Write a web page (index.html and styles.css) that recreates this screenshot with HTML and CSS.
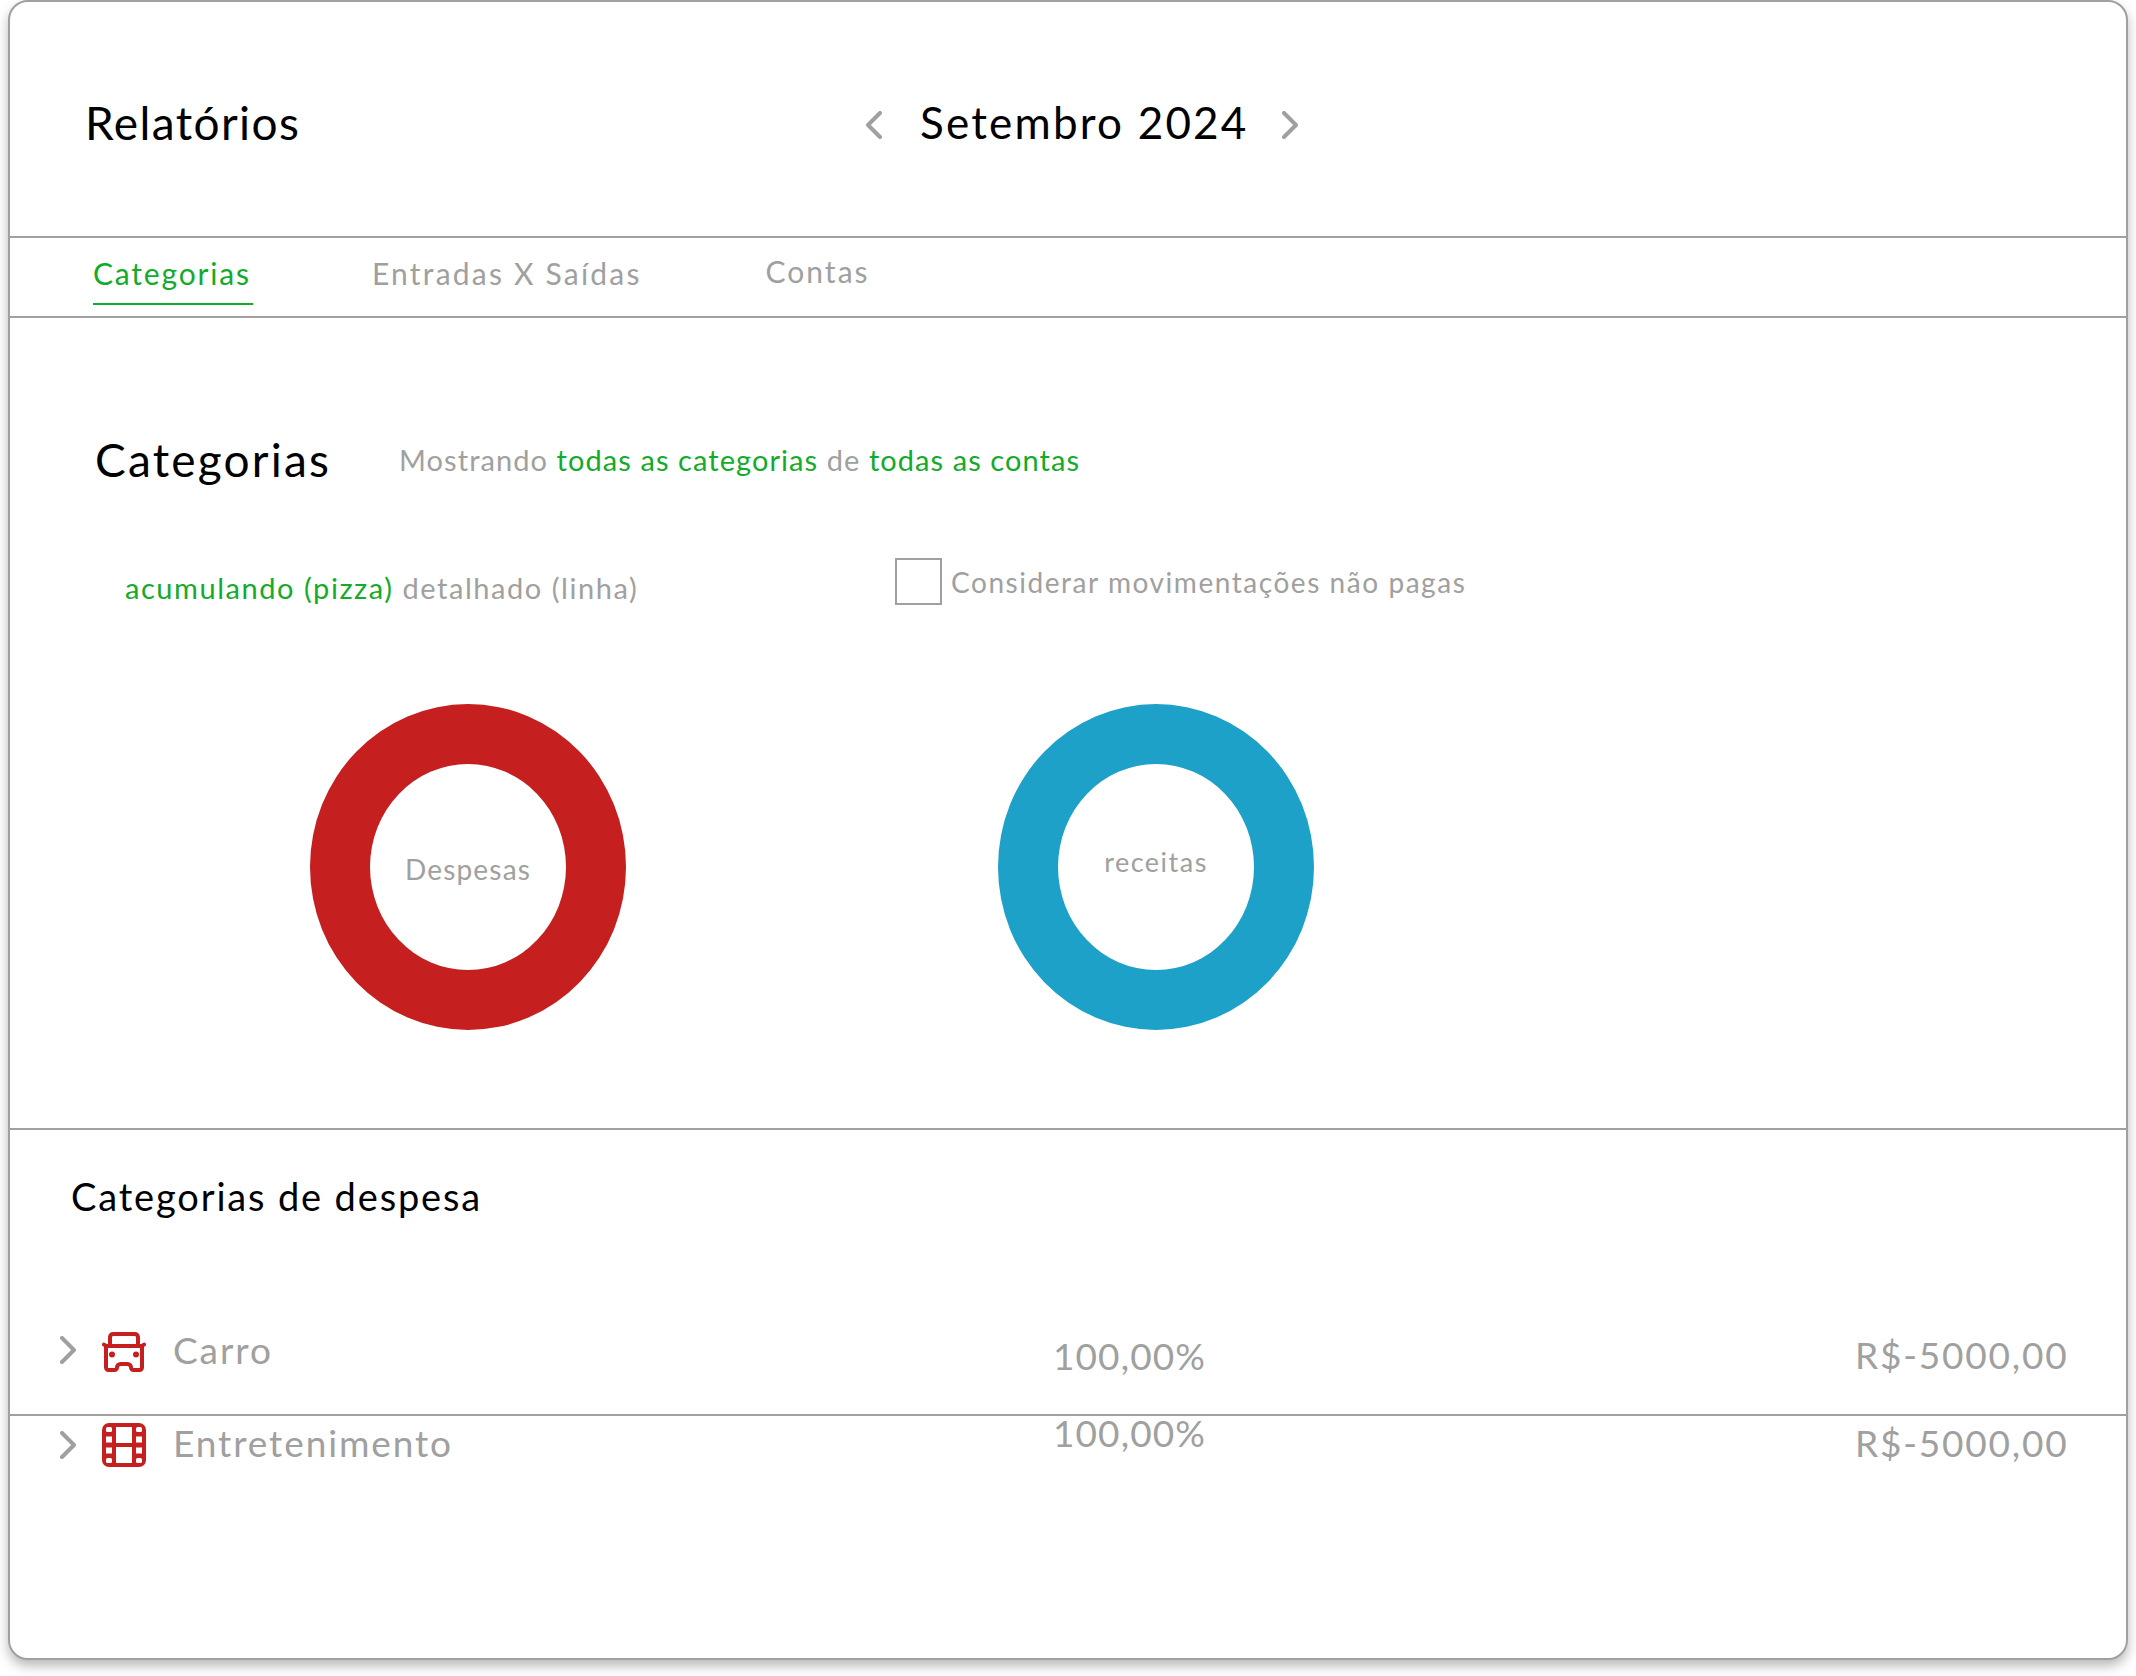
FILE: index.html
```html
<!DOCTYPE html>
<html lang="pt-BR">
<head>
<meta charset="utf-8">
<title>Relatórios</title>
<link rel="stylesheet" href="styles.css">
</head>
<body>
<main class="card">
  <header class="top">
    <h1 class="page-title">Relatórios</h1>
    <div class="month-nav">
      <svg class="chev chev-nav" viewBox="0 0 16 28"><path d="M14 2 2 14l12 12"/></svg>
      <span class="month">Setembro 2024</span>
      <svg class="chev chev-nav chev-next" viewBox="0 0 16 28"><path d="M2 2l12 12L2 26"/></svg>
    </div>
  </header>
  <nav class="tabs">
    <a class="tab tab-active">Categorias</a>
    <a class="tab tab-mid">Entradas X Saídas</a>
    <a class="tab tab-last">Contas</a>
  </nav>
  <section class="charts">
    <div class="heading-row">
      <h2 class="section-title">Categorias</h2>
      <p class="filter">Mostrando <b class="on">todas as categorias</b> de <b class="on">todas as contas</b></p>
    </div>
    <div class="options-row">
      <p class="mode"><b class="on">acumulando (pizza)</b> detalhado (linha)</p>
      <label class="check"><span class="box"></span><span>Considerar movimentações não pagas</span></label>
    </div>
    <div class="donuts">
      <div class="donut donut-red"><span class="donut-label">Despesas</span></div>
      <div class="donut donut-blue"><span class="donut-label donut-label-small">receitas</span></div>
    </div>
  </section>
  <section class="expenses">
    <h3 class="sub-title">Categorias de despesa</h3>
    <div class="row row-first">
      <svg class="chev chev-up" viewBox="0 0 16 28"><path d="M2 2l12 12L2 26"/></svg>
      <svg class="icon" viewBox="0 0 44 40"><g fill="none" stroke="#c51f1f" stroke-width="4" stroke-linecap="round" stroke-linejoin="round"><path d="M8 14V5a3.500 3.500 0 0 1 3.500-3h21A3.500 3.500 0 0 1 36 5v9"/><path d="M2 12.500 4 14H40l2-1.500"/><path d="M4 14v21.500a2.500 2.500 0 0 0 2.500 2.500h6a2.500 2.500 0 0 0 2.500-2.500 3.500 3.500 0 0 1 3.500-3.500h7a3.500 3.500 0 0 1 3.500 3.500 2.500 2.500 0 0 0 2.500 2.500h6a2.500 2.500 0 0 0 2.500-2.500V14"/></g><circle cx="10" cy="22.500" r="3" fill="#c51f1f"/><circle cx="34" cy="22.500" r="3" fill="#c51f1f"/></svg>
      <span class="row-name">Carro</span>
      <span class="row-pct row-pct-down">100,00%</span>
      <span class="row-amt row-amt-down">R$-5000,00</span>
    </div>
    <div class="row row-second">
      <svg class="chev" viewBox="0 0 16 28"><path d="M2 2l12 12L2 26"/></svg>
      <svg class="icon icon-film" viewBox="0 0 44 44"><rect width="44" height="44" rx="7" fill="#c51f1f"/><g fill="#fff"><rect x="4" y="4" width="6" height="5" rx="1.500"/><rect x="4" y="13.500" width="6" height="6"/><rect x="4" y="24.500" width="6" height="6"/><rect x="4" y="35" width="6" height="5" rx="1.500"/><rect x="34" y="4" width="6" height="5" rx="1.500"/><rect x="34" y="13.500" width="6" height="6"/><rect x="34" y="24.500" width="6" height="6"/><rect x="34" y="35" width="6" height="5" rx="1.500"/><rect x="14" y="4" width="16" height="16"/><rect x="14" y="24" width="16" height="16"/></g></svg>
      <span class="row-name">Entretenimento</span>
      <span class="row-pct row-pct-up">100,00%</span>
      <span class="row-amt row-amt-up">R$-5000,00</span>
    </div>
  </section>
</main>
</body>
</html>
```
FILE: styles.css
```css
* { box-sizing: border-box; }
html, body { margin: 0; height: 1676px; background: #fff; overflow: hidden; }
body { font-family: Lato, "Open Sans", sans-serif; color: #a0a0a0; padding-left: 8px; }
h1, h2, h3, p { margin: 0; font-weight: 400; }
b { font-weight: 400; }
.on { color: #13ab2b; }

.card {
  width: 2120px; height: 1660px;
  background: #fff;
  border: 2px solid #a0a0a0;
  border-radius: 20px;
  box-shadow: 0 6px 12px rgba(0,0,0,.28);
  display: flex; flex-direction: column;
}

.top {
  height: 236px; flex: none;
  border-bottom: 2px solid #a0a0a0;
  display: flex; align-items: center;
  padding: 6px 0 0 75px;
}
.page-title { font-size: 46px; color: #000; width: 781px; letter-spacing: 1.4px; }
.month-nav { display: flex; align-items: center; gap: 38px; }
.month { font-size: 44px; color: #000; letter-spacing: 2.2px; }
.chev { width: 16px; height: 28px; flex: none; }
.chev-nav { margin-top: 6px; }
.chev-next { margin-left: -5px; }
.chev-up { margin-bottom: 5px; }
.chev path { fill: none; stroke: #a0a0a0; stroke-width: 4; stroke-linecap: round; stroke-linejoin: round; }

.tabs {
  height: 80px; flex: none;
  border-bottom: 2px solid #a0a0a0;
  display: flex; align-items: flex-start;
  padding-left: 83px;
  font-size: 30px;
}
.tab { display: block; height: 67px; padding-top: 17px; letter-spacing: 2px; }
.tab-active { color: #13ab2b; width: 160px; letter-spacing: 1.8px; border-bottom: 2px solid #13ab2b; }
.tab-mid { margin-left: 119px; letter-spacing: 2.2px; }
.tab-last { margin-left: 124px; padding-top: 15px; }

.charts { height: 812px; flex: none; border-bottom: 2px solid #a0a0a0; }
.heading-row { display: flex; align-items: center; padding: 114px 0 0 85px; }
.section-title { font-size: 46px; color: #000; letter-spacing: 2.2px; width: 304px; }
.filter { font-size: 29px; letter-spacing: 1.07px; }
.options-row { display: flex; align-items: flex-start; padding: 71px 0 0 115px; }
.mode { font-size: 29px; letter-spacing: 1.55px; width: 770px; padding-top: 12px; }
.check { display: flex; align-items: center; gap: 9px; font-size: 28px; letter-spacing: 1.55px; }
.box { width: 47px; height: 47px; border: 2px solid #a0a0a0; flex: none; }

.donuts { display: flex; padding: 99px 0 0 300px; gap: 372px; }
.donut {
  width: 316px; height: 326px;
  border: 60px solid;
  border-radius: 50%;
  display: flex; align-items: center; justify-content: center;
  flex: none;
}
.donut-red { border-color: #c51f1f; }
.donut-blue { border-color: #1da1c9; }
.donut-label { font-size: 28px; letter-spacing: 1.2px; padding-top: 4px; }
.donut-label-small { font-size: 27px; letter-spacing: 1.5px; padding-top: 0; padding-bottom: 11px; }

.expenses { flex: 1; }
.sub-title { font-size: 38px; color: #000; letter-spacing: 1.85px; padding: 43px 0 0 61px; height: 190px; }
.row { display: flex; align-items: center; padding-left: 50px; }
.row-first { height: 96px; padding-bottom: 30px; border-bottom: 2px solid #a0a0a0; }
.row-second { height: 58px; }
.icon { width: 44px; height: 40px; margin-left: 26px; flex: none; }
.icon-film { height: 44px; }
.row-name { font-size: 37px; letter-spacing: 1.9px; margin-left: 27px; width: 880px; flex: none; padding-bottom: 5px; }
.row-pct { font-size: 37px; letter-spacing: 1.1px; width: 802px; flex: none; }
.row-pct-down { padding-top: 6px; }
.row-pct-up { padding-bottom: 26px; }
.row-amt { font-size: 37px; letter-spacing: 1.8px; }
.row-amt-down { padding-top: 4px; }
.row-amt-up { padding-bottom: 5px; }
```
